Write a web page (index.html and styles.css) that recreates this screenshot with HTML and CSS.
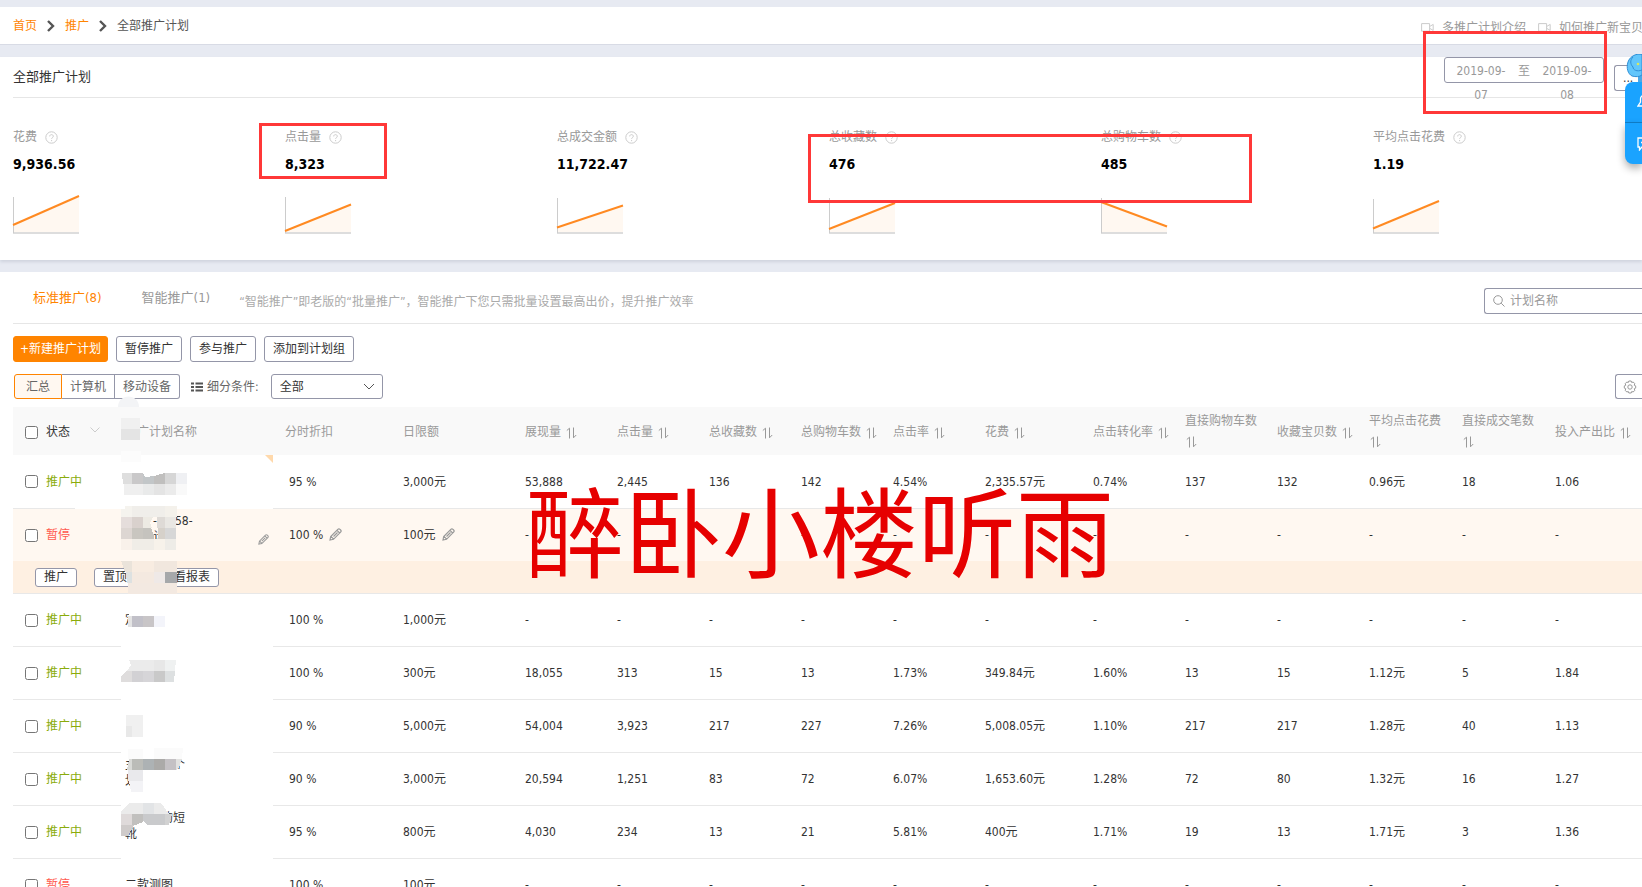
FILE: index.html
```html
<!DOCTYPE html>
<html lang="zh-CN">
<head>
<meta charset="utf-8">
<title>全部推广计划</title>
<link rel="stylesheet" href="styles.css">
</head>
<body>
<svg class="defs" aria-hidden="true">
  <symbol id="help" viewBox="0 0 13 13"><circle cx="6.500" cy="6.500" r="5.700" fill="none" stroke="currentColor"/><path d="M4.700 5.400c0-2.400 3.600-2.300 3.600-.1 0 1.300-1.700 1.300-1.700 2.500M6.600 9v1.200" fill="none" stroke="currentColor"/></symbol>
  <symbol id="sort" viewBox="0 0 11 12"><path d="M3.500 11.500V1.200L.8 3.500M7.500.5v10.300L10.200 8" fill="none" stroke="currentColor"/></symbol>
  <symbol id="pen" viewBox="0 0 13 13"><path d="M1 12l.7-3.500L8.800 1.400c.7-.7 1.500-.7 2.200 0l.6.6c.7.700.7 1.500 0 2.200l-7.100 7.100zM2 8.400l2.600 2.700M8 2.300l2.700 2.700M4.500 8.500l4-4" fill="none" stroke="currentColor" stroke-width="1.200"/></symbol>
  <symbol id="cam" viewBox="0 0 13 9"><path d="M.6.6h8v7.600h-8zM8.800 3.400l3.400-2v6l-3.400-2" fill="none" stroke="currentColor"/></symbol>
  <symbol id="chev" viewBox="0 0 8 12"><path d="M1 1l5 5-5 5" fill="none" stroke="currentColor" stroke-width="2.400"/></symbol>
</svg>

<header class="topbar">
  <nav class="crumbs">
    <a href="#">首页</a><svg class="chev"><use href="#chev"/></svg><a href="#">推广</a><svg class="chev"><use href="#chev"/></svg><span>全部推广计划</span>
  </nav>
  <div class="guides">
    <a href="#"><svg class="cam"><use href="#cam"/></svg>多推广计划介绍</a>
    <a href="#"><svg class="cam"><use href="#cam"/></svg>如何推广新宝贝</a>
  </div>
</header>

<section class="summary">
  <div class="summary-head">
    <h1>全部推广计划</h1>
    <div class="tools">
      <button class="dates" type="button"><span>2019-09-07</span><i>至</i><span>2019-09-08</span></button>
      <button class="more" type="button">...</button>
    </div>
  </div>
  <div class="metrics">
    <div class="metric"><p>花费<svg class="help"><use href="#help"/></svg></p><strong>9,936.56</strong>
      <svg class="chart" viewBox="0 0 68 40"><path class="area" d="M1 30L66 2V38H1z"/><path class="base" d="M0 38h66"/><path class="axis" d="M.5 2v36"/><path class="line" d="M0 30L66 1"/></svg></div>
    <div class="metric"><p>点击量<svg class="help"><use href="#help"/></svg></p><strong>8,323</strong>
      <svg class="chart" viewBox="0 0 68 40"><path class="area" d="M1 36L66 10V38H1z"/><path class="base" d="M0 38h66"/><path class="axis" d="M.5 2v36"/><path class="line" d="M0 36L66 9.500"/></svg></div>
    <div class="metric"><p>总成交金额<svg class="help"><use href="#help"/></svg></p><strong>11,722.47</strong>
      <svg class="chart" viewBox="0 0 68 40"><path class="area" d="M1 32L66 11V38H1z"/><path class="base" d="M0 38h66"/><path class="axis" d="M.5 3v35"/><path class="line" d="M0 32.500L66 10.500"/></svg></div>
    <div class="metric"><p>总收藏数<svg class="help"><use href="#help"/></svg></p><strong>476</strong>
      <svg class="chart" viewBox="0 0 68 40"><path class="area" d="M1 33L66 8V38H1z"/><path class="base" d="M0 38h66"/><path class="axis" d="M.5 3v35"/><path class="line" d="M0 34L66 8"/></svg></div>
    <div class="metric"><p>总购物车数<svg class="help"><use href="#help"/></svg></p><strong>485</strong>
      <svg class="chart" viewBox="0 0 68 40"><path class="area" d="M1 8L66 31V38H1z"/><path class="base" d="M0 38h66"/><path class="axis" d="M.5 3v35"/><path class="line" d="M0 7L66 31.500"/></svg></div>
    <div class="metric"><p>平均点击花费<svg class="help"><use href="#help"/></svg></p><strong>1.19</strong>
      <svg class="chart" viewBox="0 0 68 40"><path class="area" d="M1 34L66 7V38H1z"/><path class="base" d="M0 38h66"/><path class="axis" d="M.5 4v34"/><path class="line" d="M0 33.500L66 6"/></svg></div>
  </div>
</section>

<main class="plans">
  <div class="tabs">
    <a class="on" href="#">标准推广(8)</a><a href="#">智能推广(1)</a>
    <p>“智能推广”即老版的“批量推广”，智能推广下您只需批量设置最高出价，提升推广效率</p>
    <label class="search"><svg viewBox="0 0 12 12"><circle cx="5" cy="5" r="4.300" fill="none" stroke="#999"/><path d="M8.200 8.200L11.500 11.500" stroke="#999"/></svg><input type="text" placeholder="计划名称" aria-label="计划名称"></label>
  </div>
  <div class="row">
    <button class="btn primary" type="button">+新建推广计划</button>
    <button class="btn" type="button">暂停推广</button>
    <button class="btn" type="button">参与推广</button>
    <button class="btn" type="button">添加到计划组</button>
  </div>
  <div class="filters">
    <div class="segment"><button class="on" type="button">汇总</button><button type="button">计算机</button><button type="button">移动设备</button></div>
    <label class="cond" for="cond"><svg viewBox="0 0 12 10"><path d="M0 1.500h3M4.500 1.500H12M0 5h3M4.500 5H12M0 8.500h3M4.500 8.500H12" stroke="#555" stroke-width="2"/></svg>细分条件:</label>
    <div class="select"><select id="cond"><option>全部</option></select><svg viewBox="0 0 12 7"><path d="M1 1l5 5 5-5" fill="none" stroke="#555"/></svg></div>
    <button class="gear" type="button" aria-label="设置"><svg viewBox="0 0 14 14" fill="none" stroke="#999"><path d="M5.800 1h2.400l.5 1.500 1.500-.5 1.600 1.700-.6 1.500 1.500.7v2.200l-1.500.7.6 1.500-1.600 1.700-1.500-.5-.5 1.500H5.800l-.5-1.500-1.500.5-1.600-1.700.6-1.500-1.500-.7V5.900l1.500-.7-.6-1.500L3.800 2l1.500.5z"/><circle cx="7" cy="7" r="2.200"/></svg></button>
  </div>
  <div class="grid">
  <table>
    <colgroup><col class="c-check"><col class="c-state"><col class="c-name"><col class="c-rate"><col class="c-limit"><col class="c-num"><col class="c-num"><col class="c-num"><col class="c-num"><col class="c-num"><col class="c-cost"><col class="c-num"><col class="c-num"><col class="c-num"><col class="c-wide"><col class="c-wide"><col></colgroup>
    <thead><tr>
      <th class="check"><input type="checkbox" aria-label="全选"></th>
      <th class="state">状态<svg class="caret" viewBox="0 0 10 6"><path d="M.5.5L5 5 9.500.5" fill="none" stroke="#ccc"/></svg></th>
      <th class="name">推广计划名称</th><th class="rate">分时折扣</th><th>日限额</th>
      <th>展现量<svg class="sort"><use href="#sort"/></svg></th>
      <th>点击量<svg class="sort"><use href="#sort"/></svg></th>
      <th>总收藏数<svg class="sort"><use href="#sort"/></svg></th>
      <th>总购物车数<svg class="sort"><use href="#sort"/></svg></th>
      <th>点击率<svg class="sort"><use href="#sort"/></svg></th>
      <th>花费<svg class="sort"><use href="#sort"/></svg></th>
      <th>点击转化率<svg class="sort"><use href="#sort"/></svg></th>
      <th class="wrap">直接购物车数 <svg class="sort"><use href="#sort"/></svg></th>
      <th>收藏宝贝数<svg class="sort"><use href="#sort"/></svg></th>
      <th class="wrap">平均点击花费 <svg class="sort"><use href="#sort"/></svg></th>
      <th class="wrap">直接成交笔数 <svg class="sort"><use href="#sort"/></svg></th>
      <th>投入产出比<svg class="sort"><use href="#sort"/></svg></th>
    </tr></thead>
    <tbody>
      <tr><td class="check"><input type="checkbox" aria-label="选择计划1"></td><td class="run">推广中</td><td class="name"></td><td class="rate">95 %</td><td>3,000元</td><td>53,888</td><td>2,445</td><td>136</td><td>142</td><td>4.54%</td><td>2,335.57元</td><td>0.74%</td><td>137</td><td>132</td><td>0.96元</td><td>18</td><td>1.06</td></tr>
      <tr class="hover"><td class="check"><input type="checkbox" aria-label="选择计划2"></td><td class="stop">暂停</td><td class="name"><div class="edit"><span class="lines"><span class="tail">-</span><span class="tail2">58-</span><br><span class="tail">计</span></span><svg class="pen small"><use href="#pen"/></svg></div></td><td class="rate">100 %<svg class="pen"><use href="#pen"/></svg></td><td>100元<svg class="pen"><use href="#pen"/></svg></td><td>-</td><td>-</td><td>-</td><td>-</td><td>-</td><td>-</td><td>-</td><td>-</td><td>-</td><td>-</td><td>-</td><td>-</td></tr>
      <tr class="actions"><td colspan="17"><div><button type="button">推广</button><button type="button">置顶</button><button type="button">查看报表</button></div></td></tr>
      <tr><td class="check"><input type="checkbox" aria-label="选择计划3"></td><td class="run">推广中</td><td class="name">定</td><td class="rate">100 %</td><td>1,000元</td><td>-</td><td>-</td><td>-</td><td>-</td><td>-</td><td>-</td><td>-</td><td>-</td><td>-</td><td>-</td><td>-</td><td>-</td></tr>
      <tr><td class="check"><input type="checkbox" aria-label="选择计划4"></td><td class="run">推广中</td><td class="name"></td><td class="rate">100 %</td><td>300元</td><td>18,055</td><td>313</td><td>15</td><td>13</td><td>1.73%</td><td>349.84元</td><td>1.60%</td><td>13</td><td>15</td><td>1.12元</td><td>5</td><td>1.84</td></tr>
      <tr><td class="check"><input type="checkbox" aria-label="选择计划5"></td><td class="run">推广中</td><td class="name"></td><td class="rate">90 %</td><td>5,000元</td><td>54,004</td><td>3,923</td><td>217</td><td>227</td><td>7.26%</td><td>5,008.05元</td><td>1.10%</td><td>217</td><td>217</td><td>1.28元</td><td>40</td><td>1.13</td></tr>
      <tr><td class="check"><input type="checkbox" aria-label="选择计划6"></td><td class="run">推广中</td><td class="name"><div class="lines">主<span class="gap-l">个</span><br>划</div></td><td class="rate">90 %</td><td>3,000元</td><td>20,594</td><td>1,251</td><td>83</td><td>72</td><td>6.07%</td><td>1,653.60元</td><td>1.28%</td><td>72</td><td>80</td><td>1.32元</td><td>16</td><td>1.27</td></tr>
      <tr><td class="check"><input type="checkbox" aria-label="选择计划7"></td><td class="run">推广中</td><td class="name"><div class="lines"><span class="gap-l">的短</span><br>靴</div></td><td class="rate">95 %</td><td>800元</td><td>4,030</td><td>234</td><td>13</td><td>21</td><td>5.81%</td><td>400元</td><td>1.71%</td><td>19</td><td>13</td><td>1.71元</td><td>3</td><td>1.36</td></tr>
      <tr><td class="check"><input type="checkbox" aria-label="选择计划8"></td><td class="stop">暂停</td><td class="name">二款测图</td><td class="rate">100 %</td><td>100元</td><td>-</td><td>-</td><td>-</td><td>-</td><td>-</td><td>-</td><td>-</td><td>-</td><td>-</td><td>-</td><td>-</td><td>-</td></tr>
    </tbody>
  </table>
  </div>
</main>

<svg class="mosaic" viewBox="75 395 200 460" shape-rendering="crispEdges" aria-hidden="true">
  <path fill="#f3f4f6" shape-rendering="auto" d="M118 407c0-14 21-14 21 0z"/>
  <path fill="#f0f0f0" d="M121 418h19v11h-19z"/><path fill="#e4e4e4" d="M121 429h19v11h-19z"/>
  <path fill="#fcfcfc" d="M121 451h20v11h-20z"/>
  <path fill="#ffd9ac" shape-rendering="auto" d="M265 455h8v8z"/>
  <path fill="#fff" d="M75 508h46v1H75z"/>
  <path fill="#dedede" d="M122 473h10v11h-9z"/><path fill="#c9c8c9" d="M132 473h11v11h-11z"/><path fill="#c2c6c8" d="M143 473l2 4 9-1v8h-11z"/><path fill="#c0bfbe" d="M154 476l11-3v11h-11z"/><path fill="#d6d6d6" d="M165 473h11v11h-11z"/><path fill="#eff0f3" d="M176 473h11v11h-11z"/>
  <path fill="#efefef" d="M124 484h19v11h-19z"/><path fill="#e9eaea" d="M143 484h11v11h-11z"/><path fill="#e4e4e4" d="M154 484h11v11h-11z"/><path fill="#ebebeb" d="M165 484h11v11h-11z"/><path fill="#f9f9f9" d="M176 484h11v11h-11z"/>
  <path fill="#f5f3ee" d="M121 509h11v8h-11zM125 506h7v3h-7z"/><path fill="#f0eeea" d="M132 506h33v11h-33z"/><path fill="#f4f1eb" d="M165 506h12v11h-12z"/>
  <path fill="#e5dddb" d="M121 517h11v11h-11z"/><path fill="#d9d1cd" d="M132 517h11v11h-11z"/><path fill="#edeae3" d="M143 517h10l-3 6 2 5h-9z"/><path fill="#dedad6" d="M157 517h8v11h-8z"/><path fill="#e9e7e3" d="M165 517h11v11h-11z"/>
  <path fill="#ddd6d2" d="M121 528h11v11h-11z"/><path fill="#c9c6c0" d="M132 528h11v11h-11z"/><path fill="#c5c3be" d="M143 528h8l3 7v4h-11z"/><path fill="#d6d1ca" d="M158 528h7v11h-7z"/><path fill="#d7d7d7" d="M165 528h11v11h-11z"/>
  <path fill="#f9f1ea" d="M121 539h11v11h-11z"/><path fill="#f0ede7" d="M132 539h22v11h-22z"/><path fill="#f7f2ea" d="M154 539h11v11h-11z"/><path fill="#eeece7" d="M165 539h11v11h-11z"/>
  <path fill="#eae3da" d="M121 561h11v11h-7z"/><path fill="#f8ece1" d="M132 561h22v11h-22z"/><path fill="#f1e7de" d="M154 561h23v11h-23z"/>
  <path fill="#dde1e1" d="M126 572h6v11h-5z"/><path fill="#f4e9e0" d="M132 572h22v11h-22z"/><path fill="#efe9e7" d="M154 572h11v11h-11z"/><path fill="#a6a8aa" d="M165 572h12v11h-12z"/><path fill="#f3e9e1" d="M128 583h49v11h-49z"/>
  <path fill="#e4e4e4" d="M128 616h4v11h-4z"/><path fill="#c1c0c8" d="M132 616h11v11h-11z"/><path fill="#c8c5c7" d="M143 616h11v11h-11z"/><path fill="#f3f4fa" d="M154 616h11v11h-11z"/>
  <path fill="#fff" d="M129 610h10v6h-10zM129 627h10v3h-10z"/>
  <path fill="#ebebeb" d="M129 660h25v11h-27l4-6z"/><path fill="#e7e7e7" d="M154 660h11v11h-11z"/><path fill="#eff1f1" d="M165 660h11l-1 11h-10z"/>
  <path fill="#dfdddd" d="M121 676l5-5h6v11h-11z"/><path fill="#d2d1d4" d="M132 671h11v11h-11z"/><path fill="#d6d5d8" d="M143 671h11v11h-11z"/><path fill="#c9c9c9" d="M154 671h11v11h-11z"/><path fill="#dde0e1" d="M165 671h10l-1 11h-9z"/>
  <path fill="#f0f0f0" d="M126 715h17v11h-17zM132 726h11v11h-11z"/><path fill="#e8e8e8" d="M126 726h6v11h-6z"/>
  <path fill="#fbfbfb" d="M128 749h15v10h-15zM154 748h29l-1 11h-28z"/><path fill="#d9dad7" d="M129 759h3v11h-5z"/><path fill="#bbbcb8" d="M132 759h11v11h-11z"/><path fill="#adb2b4" d="M143 759h11v11h-11z"/><path fill="#abaaa8" d="M154 759h11v11h-11z"/><path fill="#c4c1c4" d="M165 759h11v11h-11z"/><path fill="#e2e2e0" d="M176 759h6l-3 8-3 3z"/>
  <path fill="#e9e9ec" d="M128 770h15v11h-15z"/><path fill="#f3f3f6" d="M129 781h14v11h-12z"/>
  <path fill="#ebebeb" d="M129 803h14v11h-22v-2z"/><path fill="#e2e4e6" d="M143 803h11v11h-11z"/><path fill="#ebebeb" d="M154 803h7l8 11h-15z"/>
  <path fill="#dfdada" d="M121 814h11v11h-11z"/><path fill="#c1c0be" d="M132 814h11v8l-7 3h-4z"/><path fill="#c9cacc" d="M143 814h22v11h-18l-4-4z"/><path fill="#d2d2d2" d="M165 814h7l-3 11h-4z"/><path fill="#cfcbca" d="M121 825h13l-6 11h-7z"/>
</svg>

<div class="mark mark-date"></div>
<div class="mark mark-click"></div>
<div class="mark mark-cart"></div>
<div class="watermark">醉卧小楼听雨</div>

<aside class="helper">
  <svg class="robot" viewBox="0 0 16 28"><path d="M12 21h4v7h-4z" fill="#4aa8e8"/><path d="M16 .5C11-1 4 2 2 8c-2 6 0 12 4 14 4 1 7 1 10-1z" fill="#62c6fb" stroke="#2f8fd6"/><path d="M7 3c-3 3-3 7 0 10 0 3 4 5 9 3" fill="none" stroke="#2f8fd6"/><circle cx="12" cy="10" r="1.300" fill="#dbe85b"/></svg>
  <button type="button" aria-label="通知"><svg viewBox="0 0 14 14" fill="none" stroke="#fff" stroke-width="1.300"><path d="M1 11h12L10.500 7V4a3.500 3.500 0 0 0-7 0v3z"/></svg></button>
  <button type="button" aria-label="客服"><svg viewBox="0 0 14 14" fill="none" stroke="#fff" stroke-width="1.300"><path d="M1 1h12v9H5l-2.500 3v-3H1zM4 5.500h1M7 5.500h1"/></svg></button>
</aside>
</body>
</html>
```
FILE: styles.css
```css
* { box-sizing: border-box; }
html { overflow: hidden; }
body {
  margin: 0;
  padding-top: 7px;
  position: relative;
  overflow: hidden;
  background: #e7eaf2;
  color: #333;
  font: 12px/20px "DejaVu Sans Condensed", "Noto Sans CJK SC", sans-serif;
}
button, input, select { font: inherit; color: inherit; }
button { padding: 0; cursor: pointer; }
a { color: inherit; text-decoration: none; }
p, h1 { margin: 0; }
.defs { display: none; }

.topbar {
  display: flex;
  justify-content: space-between;
  height: 38px;
  padding-left: 13px;
  background: #fff;
  border-bottom: 1px solid #d8dbe5;
}
.crumbs { display: flex; align-items: center; gap: 10px; color: #555; }
.crumbs a { color: #ff8400; }
.chev { width: 8px; height: 12px; color: #555; }
.guides { display: flex; align-items: center; gap: 12px; margin-right: -1px; padding-top: 4px; color: #999; }
.guides a { display: flex; align-items: center; gap: 8px; white-space: nowrap; }
.cam { width: 13px; height: 9px; color: #ccc; }

.summary {
  margin-top: 12px;
  padding-left: 13px;
  background: #fff;
  box-shadow: 0 2px 3px #cfd3de;
}
.summary-head { display: flex; justify-content: space-between; height: 41px; border-bottom: 1px solid #e6e6e6; }
h1 { font-size: 13px; font-weight: 400; line-height: 40px; }
.tools { display: flex; align-items: flex-start; gap: 10px; color: #999; }
.dates {
  display: flex;
  align-items: flex-start;
  justify-content: center;
  width: 160px;
  height: 26px;
  padding-top: 1px;
  line-height: 24px;
  border: 1px solid #9496a8;
  border-radius: 3px;
  background: none;
}
.dates span { width: 62px; padding: 0 4px; }
.dates i { width: 24px; font-style: normal; }
.more {
  width: 28px;
  height: 26px;
  margin-top: 8px;
  padding-left: 8px;
  text-align: left;
  border: 1px solid #9496a8;
  border-right: 0;
  border-radius: 3px 0 0 3px;
  background: none;
  color: #333;
}
.metrics { display: grid; grid-template-columns: repeat(6, 1fr); margin-right: -3px; padding: 29px 0 25px; }
.metric p { display: flex; align-items: center; gap: 8px; color: #999; }
.help { width: 13px; height: 13px; color: #ccc; }
.metric strong { display: block; margin: 7px 0 21px; color: #000; font-size: 14px; line-height: 20px; }
.chart { display: block; width: 68px; height: 40px; overflow: visible; fill: none; }
.chart .area { fill: #fff8f1; }
.chart .axis { stroke: #ccc; }
.chart .base { stroke: #ddd; stroke-width: 2; }
.chart .line { stroke: #ff8a22; stroke-width: 2; }

.plans { margin-top: 12px; padding-left: 13px; background: #fff; }
.tabs { display: flex; height: 52px; border-bottom: 1px solid #e6e6e6; color: #999; }
.tabs a { margin-left: 20px; margin-right: 20px; font-size: 13px; line-height: 52px; }
.tabs .on { color: #ff8400; }
.tabs p { margin: 20px auto 0 9px; color: #aaa; }
.search {
  display: flex;
  align-items: center;
  gap: 5px;
  width: 158px;
  height: 26px;
  margin-top: 16px;
  padding-left: 8px;
  border: 1px solid #9496a8;
  border-right: 0;
  border-radius: 3px 0 0 3px;
}
.search svg { width: 12px; height: 12px; }
.search input { width: 110px; padding: 0; border: 0; outline: 0; background: none; }
.search input::placeholder { color: #999; }
.row { display: flex; gap: 8px; padding-top: 12px; }
.btn { height: 26px; padding: 0 8px; border: 1px solid #9496a8; border-radius: 3px; background: #fff; }
.primary { padding: 0 6px; border-color: #ff8400; background: #ff8400; color: #fff; }
.filters { display: flex; align-items: center; padding: 12px 0 8px 1px; color: #666; }
.segment { display: flex; }
.segment button { height: 25px; padding: 0 8px; border: 1px solid #9496a8; border-left: 0; background: #fff; }
.segment button:last-child { border-radius: 0 3px 3px 0; }
.segment .on { padding: 0 11px; border: 1px solid #ff8400; border-radius: 3px 0 0 3px; background: #fff8f1; }
.cond { display: flex; align-items: center; gap: 4px; margin: 0 12px 0 11px; }
.cond svg { width: 12px; height: 10px; }
.select { display: grid; align-items: center; width: 112px; color: #333; }
.select select { grid-area: 1 / 1; height: 25px; padding: 0 8px; border: 1px solid #9496a8; border-radius: 3px; background: #fff; appearance: none; }
.select svg { grid-area: 1 / 1; justify-self: end; width: 12px; height: 7px; margin-right: 8px; pointer-events: none; }
.gear { display: flex; align-items: center; width: 27px; height: 25px; margin-left: auto; padding-left: 7px; border: 1px solid #9496a8; border-right: 0; border-radius: 3px 0 0 3px; background: #fff; }
.gear svg { width: 14px; height: 14px; }

table { width: 100%; table-layout: fixed; border-collapse: separate; border-spacing: 0; }
.c-check { width: 33px; }
.c-state { width: 75px; }
.c-name { width: 152px; }
.c-rate { width: 130px; }
.c-limit { width: 122px; }
.c-num { width: 92px; }
.c-wide { width: 93px; }
.c-cost { width: 108px; }
th { height: 48px; padding: 2px 0 0; background: #f9f9f9; color: #999; font-weight: 400; text-align: left; }
th.wrap { padding: 0 12px 0 0; }
.wrap .sort { margin-left: 1px; }
td { height: 53px; padding: 0; border-bottom: 1px solid #e8e8e8; line-height: 16px; }
tbody tr:first-child td { height: 54px; }
.check { padding-left: 12px; }
input[type="checkbox"] { display: block; width: 13px; height: 13px; margin: 0; }
.state { color: #333; }
.caret { width: 10px; height: 6px; margin-left: 20px; vertical-align: 3px; }
.sort { width: 11px; height: 12px; margin-left: 5px; vertical-align: -3px; }
th.name, td.name { padding-left: 4px; }
td.name { border-bottom-color: transparent; }
th.rate { padding-left: 12px; }
td.rate { padding-left: 16px; }
.run { color: #8aab0b; }
.stop { color: #ff5b50; }
.hover td { height: 52px; border-bottom: 0; background: #fff8f1; }
.actions td { height: 33px; padding-left: 22px; background: #fef0e2; }
.actions div { display: flex; gap: 17px; }
.actions button { height: 19px; padding: 0 8px; line-height: 16px; border: 1px solid #9496a8; border-radius: 3px; background: #fff; }
.pen { width: 13px; height: 13px; margin-left: 6px; color: #999; vertical-align: -2px; }
.edit { display: flex; align-items: flex-end; justify-content: space-between; padding-right: 4px; }
.pen.small { width: 11px; height: 11px; margin-bottom: 12px; }
.lines { padding-bottom: 12px; }
.tail { margin-left: 28px; }
.tail2 { margin-left: 18px; }
.gap-l { margin-left: 36px; }

.mosaic { position: absolute; left: 75px; top: 395px; width: 200px; height: 460px; pointer-events: none; }
.mark { position: absolute; border: 3px solid #ff3838; pointer-events: none; }
.mark-date { left: 1423px; top: 31px; width: 184px; height: 83px; }
.mark-click { left: 259px; top: 123px; width: 128px; height: 56px; }
.mark-cart { left: 808px; top: 134px; width: 444px; height: 69px; }
.watermark {
  position: absolute;
  left: 526px;
  top: 478px;
  color: #e60000;
  font: 98px/98px "Noto Sans CJK SC", sans-serif;
  white-space: nowrap;
  pointer-events: none;
}
.helper { position: absolute; right: 0; top: 54px; width: 17px; }
.helper button { display: block; width: 17px; height: 41px; padding-left: 12px; overflow: hidden; border: 0; background: #1aa3ff; box-shadow: 0 4px 8px #0005; }
.helper button:nth-of-type(1) { border-bottom: 1px solid #1080cc; border-radius: 8px 0 0 0; box-shadow: none; }
.helper button:nth-of-type(2) { border-radius: 0 0 0 8px; }
.helper button svg { display: block; width: 14px; height: 14px; }
.robot { display: block; width: 16px; height: 28px; margin-left: 1px; }
```
